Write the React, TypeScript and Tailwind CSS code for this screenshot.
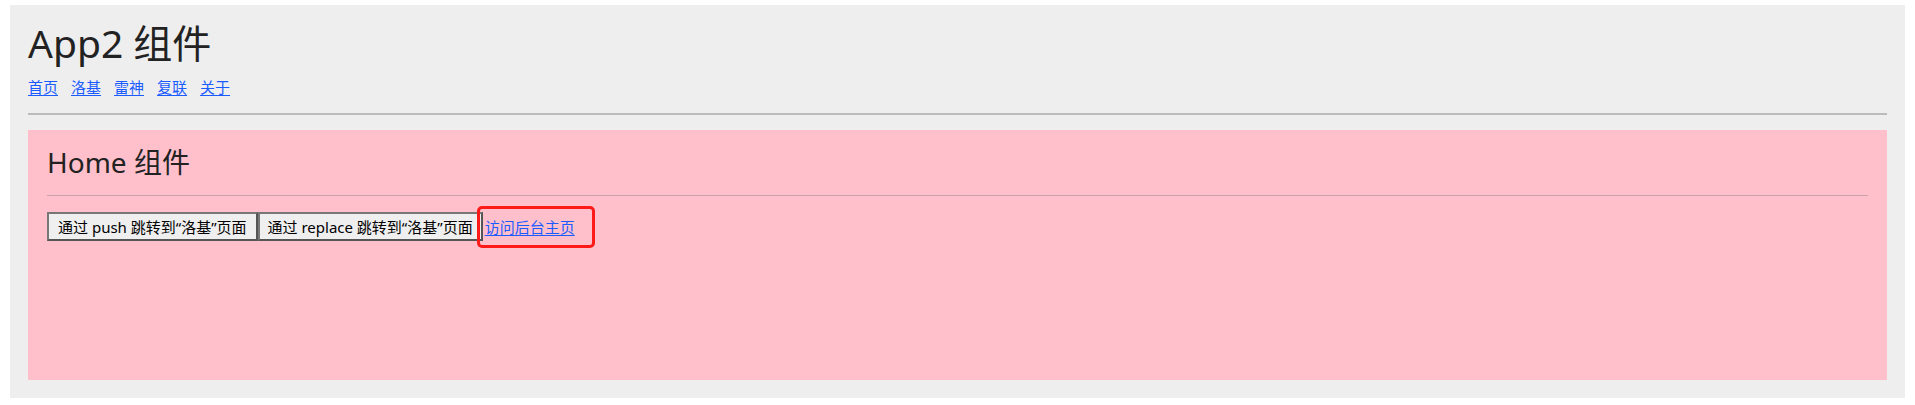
import React from "react";

const font = { fontFamily: '"Noto Sans", "Noto Sans CJK SC", sans-serif' };

export default function App() {
  const links = ["首页", "洛基", "雷神", "复联", "关于"];
  return (
    <div className="w-[1915px] h-[405px] bg-white pt-[5px] pl-[10px]" style={font}>
      <div className="w-[1895px] h-[393px] bg-[#eeeeee] pt-[16px] px-[18px] text-[#222]">
        <div className="text-[39px] leading-[44px] text-[#222]">App2 组件</div>
        <div className="mt-[12px] flex gap-[13px] text-[15px] leading-[20px]">
          {links.map((l) => (
            <a key={l} href="#" className="text-[#1a5cff] underline underline-offset-2">
              {l}
            </a>
          ))}
        </div>
        <div className="mt-[16px] h-[2px] bg-[#bbbbbb]" />
        <div className="mt-[15px] h-[250px] bg-[#ffc0cb] pt-[14px] px-[19px]">
          <div className="text-[28px] leading-[36px] text-[#222]">Home 组件</div>
          <div className="mt-[15px] h-px bg-[#c9a1a9]" />
          <div className="mt-[16px] flex items-center">
            <button className="h-[29px] px-[9px] bg-[#efefef] border-2 border-[#555] border-t-[#777] border-l-[#777] text-[15px] leading-[20px] text-black">
              通过 push 跳转到“洛基”页面
            </button>
            <button className="h-[29px] px-[8px] bg-[#efefef] border-2 border-[#555] border-t-[#777] border-l-[#777] text-[15px] leading-[20px] text-black">
              通过 replace 跳转到“洛基”页面
            </button>
            <span className="relative ml-[2px]">
              <a href="#" className="text-[15px] leading-[20px] text-[#1a5cff] underline underline-offset-2">
                访问后台主页
              </a>
              <span className="absolute left-[-8px] top-[-9px] w-[118px] h-[42px] border-[3px] border-[#ff1a1a] rounded-[5px]" />
            </span>
          </div>
        </div>
      </div>
    </div>
  );
}
